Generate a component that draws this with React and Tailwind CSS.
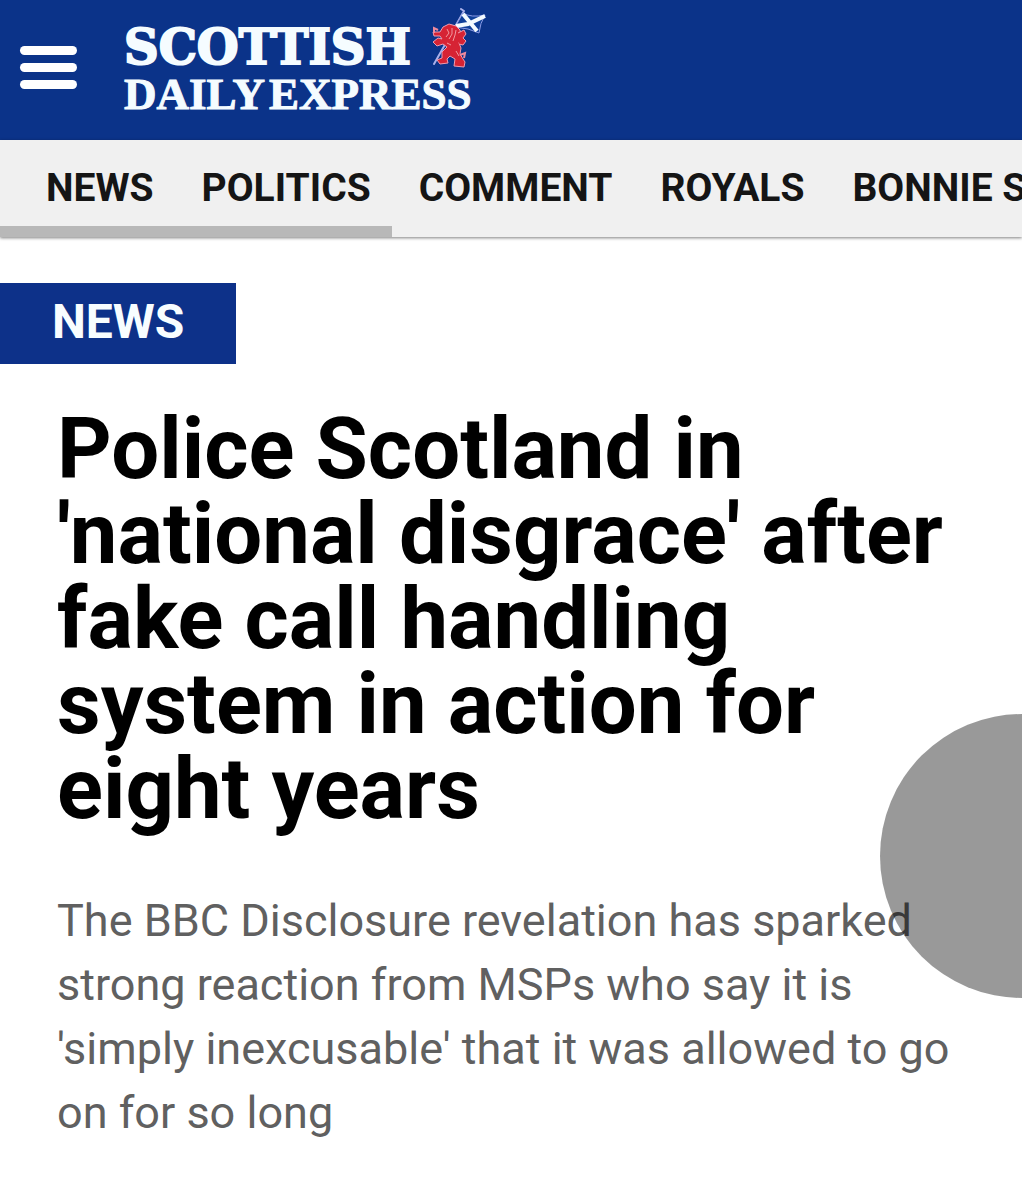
import React from 'react';

const sections = ['NEWS', 'POLITICS', 'COMMENT', 'ROYALS', 'BONNIE SCOTLAND'];

function LionFlag() {
  return (
    <svg className="w-[56px] h-[60px] shrink-0" viewBox="0 0 56 60" fill="none" aria-hidden="true">
      {/* pole */}
      <path d="M30 1 33 3 3 56" stroke="#aab0ea" strokeWidth="2" strokeLinecap="round" strokeLinejoin="round" />
      {/* saltire */}
      <path d="M32 5Q40 10 54 7Q49 15 48 25Q38 20 24 19Z" fill="#0f3f99" stroke="#8b9be5" strokeWidth="1" />
      <path d="M32 6 46 23M25 18 37 16 54 8" stroke="#f3faff" strokeWidth="4" />
      {/* body, mane and legs */}
      <path d="M12 19 18 16 25 18 29 22 30 29 28 35 30 40 29 46 32 51 34 54 33 59 23 58 24 51 19 48 16 51 17 55 9 56 6 52 11 50 11 44 16 39 12 36 6 38 2 34 7 30 11 31 9 28 3 28 2 24 9 24Z" fill="#d62334" stroke="#f09cb0" strokeWidth="1" strokeLinejoin="round" />
      {/* right paw and tail */}
      <path d="M27 25 33 22 35 26 32 30 35 33 32 37 28 36" fill="#d62334" stroke="#f09cb0" strokeWidth="1" strokeLinejoin="round" />
      <path d="M29 47 34 45 33 50M3 25 3 20 7 22" stroke="#ee8a9d" strokeWidth="2" />
      <path d="M16 21 18 25 15 29M21 20 21 26 18 31M25 22 24 27 22 33M16 35 20 37M25 43 28 48" stroke="#f0989f" strokeWidth="1" />
    </svg>
  );
}

export default function App() {
  return (
    <div className="relative min-h-screen overflow-hidden bg-white font-['Roboto',sans-serif]">
      <header className="flex h-[140px] items-start bg-[#0b3389] pl-5">
        <button type="button" aria-label="Menu" className="mt-[46px] flex w-[57px] flex-col gap-2">
          <span className="h-[9px] rounded-full bg-white" />
          <span className="h-[9px] rounded-full bg-white" />
          <span className="h-[9px] rounded-full bg-white" />
        </button>

        <a href="#home" className="ml-[47px] flex flex-col pt-2 text-[#f5fcff]">
          <span className="flex h-[64px] items-start gap-5">
            <span className="pt-4 font-['DejaVu_Serif',serif] text-[48px] leading-[46px] font-bold [-webkit-text-stroke:2px_#f5fcff]">SCOTTISH</span>
            <LionFlag />
          </span>
          <span className="flex gap-1 font-['Liberation_Serif',serif] text-[45px] leading-[44px] font-bold [-webkit-text-stroke:1px_#f5fcff]">
            <span>DAILY</span>
            <span>EXPRESS</span>
          </span>
        </a>
      </header>

      <nav className="relative bg-[#f0f0f0] shadow-[0_1px_3px_rgba(0,0,0,0.5)]">
        <ul className="flex h-[97px] gap-12 overflow-hidden pl-[46px] text-[39px] leading-[97px] font-bold whitespace-nowrap text-[#151515]">
          {sections.map((name) => (
            <li key={name}>
              <a href="#section">{name}</a>
            </li>
          ))}
        </ul>
        {/* scroll position */}
        <div className="absolute bottom-0 left-0 h-[11px] w-[392px] bg-[#b8b8b8]" />
      </nav>

      <main>
        <a href="#news" className="mt-[46px] inline-block bg-[#0d3189] px-[52px] pb-1 text-[48px] leading-[77px] font-bold text-[#f8fdff]">
          NEWS
        </a>
        <article className="px-[57px]">
          <h1 className="mt-[43px] text-[85px] leading-[85px] font-bold text-black">
            Police Scotland in 'national disgrace' after fake call handling system in action for eight years
          </h1>
          <p className="mt-[57px] text-[45px] leading-[64px] text-[#606060]">
            The BBC Disclosure revelation has sparked strong reaction from MSPs who say it is 'simply inexcusable' that it was allowed to go on for so long
          </p>
        </article>
      </main>

      <button type="button" aria-label="Assistive menu" className="absolute top-[714px] -right-[142px] size-[284px] rounded-full bg-black/40" />
    </div>
  );
}
